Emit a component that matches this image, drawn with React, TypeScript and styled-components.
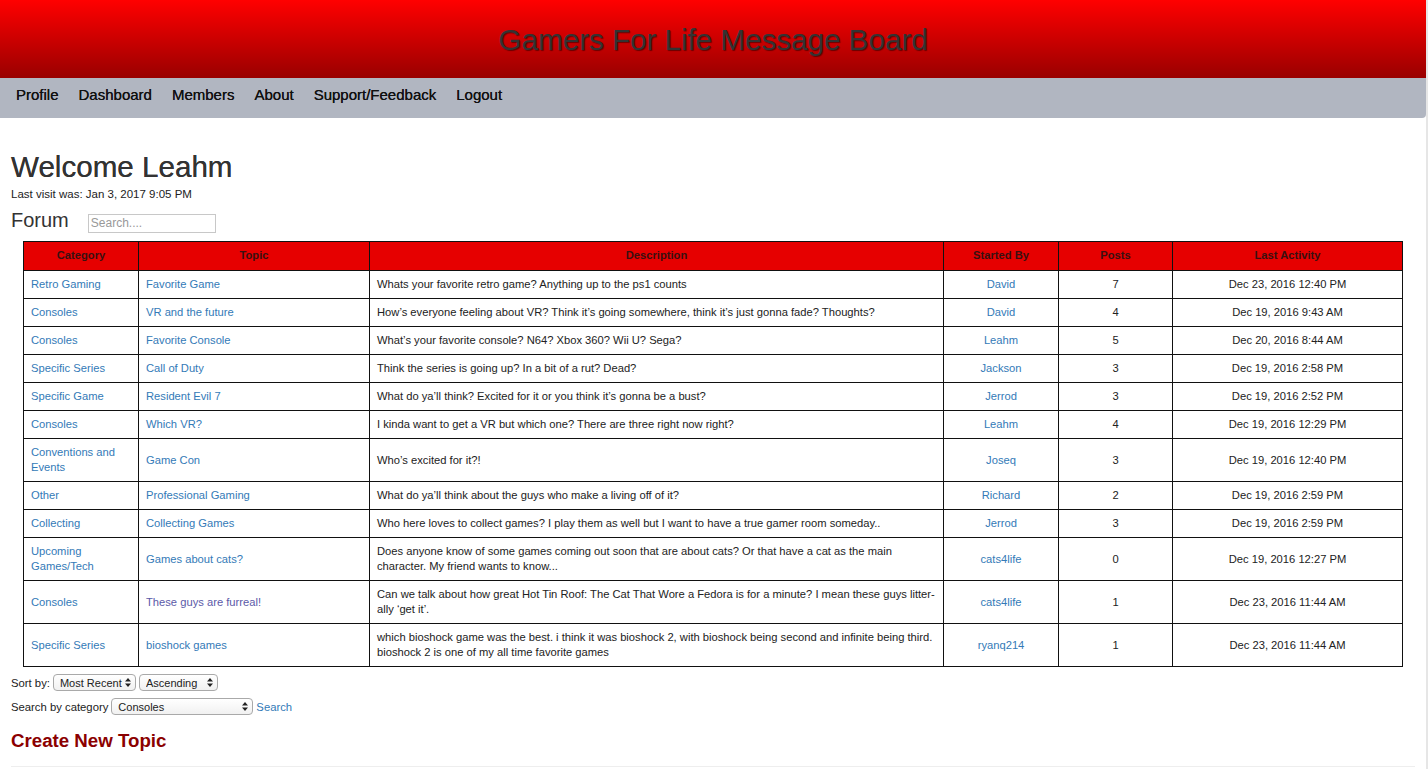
import React from 'react'
import styled, { createGlobalStyle } from 'styled-components'

const GlobalStyle = createGlobalStyle`
  html, body {
    margin: 0;
    padding: 0;
    background: #fff;
  }
  body {
    font-family: 'Liberation Sans', Arial, Helvetica, sans-serif;
    color: #333;
  }
`

interface Topic {
  category: string
  topic: string
  description: string
  startedBy: string
  posts: number
  lastActivity: string
  visited?: boolean
}

const topics: Topic[] = [
  { category: 'Retro Gaming', topic: 'Favorite Game', description: 'Whats your favorite retro game? Anything up to the ps1 counts', startedBy: 'David', posts: 7, lastActivity: 'Dec 23, 2016 12:40 PM' },
  { category: 'Consoles', topic: 'VR and the future', description: 'How\u2019s everyone feeling about VR? Think it\u2019s going somewhere, think it\u2019s just gonna fade? Thoughts?', startedBy: 'David', posts: 4, lastActivity: 'Dec 19, 2016 9:43 AM' },
  { category: 'Consoles', topic: 'Favorite Console', description: 'What\u2019s your favorite console? N64? Xbox 360? Wii U? Sega?', startedBy: 'Leahm', posts: 5, lastActivity: 'Dec 20, 2016 8:44 AM' },
  { category: 'Specific Series', topic: 'Call of Duty', description: 'Think the series is going up? In a bit of a rut? Dead?', startedBy: 'Jackson', posts: 3, lastActivity: 'Dec 19, 2016 2:58 PM' },
  { category: 'Specific Game', topic: 'Resident Evil 7', description: 'What do ya\u2019ll think? Excited for it or you think it\u2019s gonna be a bust?', startedBy: 'Jerrod', posts: 3, lastActivity: 'Dec 19, 2016 2:52 PM' },
  { category: 'Consoles', topic: 'Which VR?', description: 'I kinda want to get a VR but which one? There are three right now right?', startedBy: 'Leahm', posts: 4, lastActivity: 'Dec 19, 2016 12:29 PM' },
  { category: 'Conventions and Events', topic: 'Game Con', description: 'Who\u2019s excited for it?!', startedBy: 'Joseq', posts: 3, lastActivity: 'Dec 19, 2016 12:40 PM' },
  { category: 'Other', topic: 'Professional Gaming', description: 'What do ya\u2019ll think about the guys who make a living off of it?', startedBy: 'Richard', posts: 2, lastActivity: 'Dec 19, 2016 2:59 PM' },
  { category: 'Collecting', topic: 'Collecting Games', description: 'Who here loves to collect games? I play them as well but I want to have a true gamer room someday..', startedBy: 'Jerrod', posts: 3, lastActivity: 'Dec 19, 2016 2:59 PM' },
  { category: 'Upcoming Games/Tech', topic: 'Games about cats?', description: 'Does anyone know of some games coming out soon that are about cats? Or that have a cat as the main character. My friend wants to know...', startedBy: 'cats4life', posts: 0, lastActivity: 'Dec 19, 2016 12:27 PM' },
  { category: 'Consoles', topic: 'These guys are furreal!', description: 'Can we talk about how great Hot Tin Roof: The Cat That Wore a Fedora is for a minute? I mean these guys litter-ally \u2018get it\u2019.', startedBy: 'cats4life', posts: 1, lastActivity: 'Dec 23, 2016 11:44 AM', visited: true },
  { category: 'Specific Series', topic: 'bioshock games', description: 'which bioshock game was the best. i think it was bioshock 2, with bioshock being second and infinite being third. bioshock 2 is one of my all time favorite games', startedBy: 'ryanq214', posts: 1, lastActivity: 'Dec 23, 2016 11:44 AM' },
]

const navItems = ['Profile', 'Dashboard', 'Members', 'About', 'Support/Feedback', 'Logout']

const columns = [
  { label: 'Category', w: 115 },
  { label: 'Topic', w: 231 },
  { label: 'Description', w: 574 },
  { label: 'Started By', w: 115 },
  { label: 'Posts', w: 114 },
  { label: 'Last Activity', w: 230 },
]

const Page = styled.div`
  width: 1428px;
  min-height: 769px;
  border-right: 2px solid #e6e6e6;
  box-sizing: border-box;
`

const Header = styled.header`
  height: 78px;
  display: flex;
  align-items: center;
  justify-content: center;
  background: linear-gradient(to bottom, #ff0000 0%, #990000 100%);
`

const Title = styled.h1`
  margin: 0;
  font-size: 30px;
  font-weight: normal;
  color: #333;
  letter-spacing: -0.2px;
  text-shadow: 1px 1px 1px rgba(0, 0, 0, 0.45);
  padding-top: 2px;
`

const Nav = styled.nav`
  height: 40px;
  box-sizing: border-box;
  display: flex;
  align-items: flex-start;
  gap: 20px;
  padding: 8px 0 0 16px;
  background: #b1b6c1;
  border-bottom-right-radius: 4px;
`

const NavLink = styled.a`
  font-size: 15px;
  line-height: 18px;
  color: #111;
  text-decoration: none;
  text-shadow: 0 0 0.4px #111;
  cursor: pointer;
`

const Main = styled.main`
  padding: 32px 11px 0 11px;
`

const Welcome = styled.h1`
  margin: 0;
  font-size: 29.6px;
  line-height: 33px;
  font-weight: normal;
  color: #333;
  text-shadow: 0 0 0.6px #333;
`

const LastVisit = styled.p`
  margin: 4px 0 0;
  font-size: 11.5px;
  line-height: 15px;
  color: #222;
`

const ForumRow = styled.div`
  display: flex;
  align-items: baseline;
  gap: 19px;
  margin-top: 5px;
`

const ForumTitle = styled.h2`
  margin: 0;
  font-size: 20px;
  line-height: 26px;
  font-weight: normal;
  color: #333;
`

const SearchInput = styled.input`
  width: 128px;
  height: 19px;
  box-sizing: border-box;
  border: 1px solid #c8c8c8;
  padding: 0 2px;
  font-family: inherit;
  font-size: 12px;
  color: #333;
  &::placeholder {
    color: #999;
  }
`

const Table = styled.table`
  margin: 8px 0 0 12px;
  border-collapse: collapse;
  table-layout: fixed;
  width: 1379px;
  font-size: 11.2px;
  line-height: 15px;
`

const Col = styled.col<{ $w: number }>`
  width: ${({ $w }) => $w}px;
`

const HeadCell = styled.th`
  background: #e60000;
  border: 1px solid #111;
  padding: 6px 7px 7px;
  font-weight: bold;
  color: #3a1010;
  text-align: center;
`

const Cell = styled.td<{ $center?: boolean }>`
  border: 1px solid #111;
  padding: 6px 7px;
  color: #222;
  text-align: ${({ $center }) => ($center ? 'center' : 'left')};
  vertical-align: middle;
`

const Link = styled.a<{ $visited?: boolean }>`
  color: ${({ $visited }) => ($visited ? '#5b5aa8' : '#337ab7')};
  text-decoration: none;
  cursor: pointer;
`

const ControlRow = styled.div<{ $top: number }>`
  display: flex;
  align-items: center;
  gap: 3px;
  margin-top: ${({ $top }) => $top}px;
  font-size: 11.3px;
  color: #222;
`

const SelectWrap = styled.span<{ $w: number }>`
  position: relative;
  display: inline-block;
  width: ${({ $w }) => $w}px;
  height: 17px;
`

const Select = styled.select`
  appearance: none;
  width: 100%;
  height: 100%;
  box-sizing: border-box;
  border: 1px solid #a9a9a9;
  border-radius: 4px;
  background: linear-gradient(to bottom, #ffffff, #f1f1f1);
  padding: 0 10px 0 6px;
  font-family: inherit;
  font-size: 11px;
  color: #222;
`

const Arrows = styled.svg`
  position: absolute;
  right: 5px;
  top: 4px;
  pointer-events: none;
`

const CreateTopic = styled.h3`
  margin: 14px 0 0;
  font-size: 18.7px;
  line-height: 24px;
  font-weight: bold;
  color: #8b0000;
`

const Rule = styled.hr`
  margin: 13px 0 0;
  border: 0;
  border-top: 1px solid #eee;
`

const SelectBox = ({ width, options }: { width: number; options: string[] }) => (
  <SelectWrap $w={width}>
    <Select defaultValue={options[0]}>
      {options.map((o) => (
        <option key={o}>{o}</option>
      ))}
    </Select>
    <Arrows width="6" height="9" viewBox="0 0 6 9">
      <path d="M3 0 L6 3.5 L0 3.5 Z M3 9 L6 5.5 L0 5.5 Z" fill="#222" />
    </Arrows>
  </SelectWrap>
)

const App = () => (
  <>
    <GlobalStyle />
    <Page>
      <Header>
        <Title>Gamers For Life Message Board</Title>
      </Header>
      <Nav>
        {navItems.map((n) => (
          <NavLink key={n}>{n}</NavLink>
        ))}
      </Nav>
      <Main>
        <Welcome>Welcome Leahm</Welcome>
        <LastVisit>Last visit was: Jan 3, 2017 9:05 PM</LastVisit>
        <ForumRow>
          <ForumTitle>Forum</ForumTitle>
          <SearchInput placeholder="Search...." />
        </ForumRow>
        <Table>
          <colgroup>
            {columns.map((c) => (
              <Col key={c.label} $w={c.w} />
            ))}
          </colgroup>
          <thead>
            <tr>
              {columns.map((c) => (
                <HeadCell key={c.label}>{c.label}</HeadCell>
              ))}
            </tr>
          </thead>
          <tbody>
            {topics.map((t) => (
              <tr key={t.topic}>
                <Cell>
                  <Link>{t.category}</Link>
                </Cell>
                <Cell>
                  <Link $visited={t.visited}>{t.topic}</Link>
                </Cell>
                <Cell>{t.description}</Cell>
                <Cell $center>
                  <Link>{t.startedBy}</Link>
                </Cell>
                <Cell $center>{t.posts}</Cell>
                <Cell $center>{t.lastActivity}</Cell>
              </tr>
            ))}
          </tbody>
        </Table>
        <ControlRow $top={7}>
          Sort by:
          <SelectBox width={83} options={['Most Recent', 'Oldest']} />
          <SelectBox width={79} options={['Ascending', 'Descending']} />
        </ControlRow>
        <ControlRow $top={7}>
          Search by category
          <SelectBox width={142} options={['Consoles', 'Retro Gaming', 'Other']} />
          <Link>Search</Link>
        </ControlRow>
        <CreateTopic>Create New Topic</CreateTopic>
        <Rule />
      </Main>
    </Page>
  </>
)

export default App
